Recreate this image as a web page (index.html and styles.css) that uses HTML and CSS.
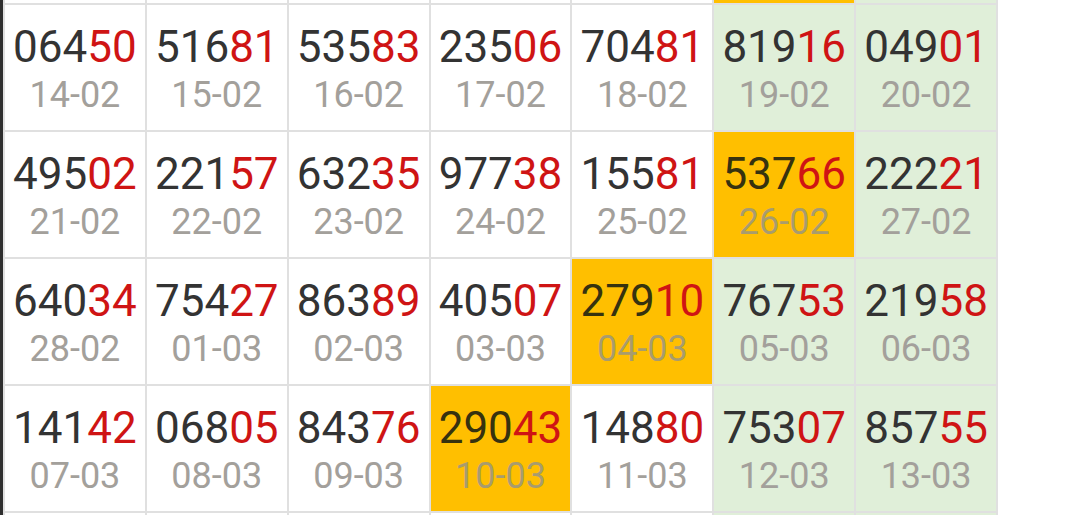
FILE: index.html
```html
<!DOCTYPE html>
<html>
<head>
<meta charset="utf-8">
<link rel="stylesheet" href="styles.css">
</head>
<body>
<div class="screen">
  <div class="edge"></div>
  <div class="viewport">
    <div class="table">
      <div class="cell"></div><div class="cell"></div><div class="cell"></div><div class="cell"></div><div class="cell"></div><div class="cell hit"></div><div class="cell wk"></div>

      <div class="cell"><div class="num">064<span class="r">50</span></div><div class="date">14-02</div></div>
      <div class="cell"><div class="num">516<span class="r">81</span></div><div class="date">15-02</div></div>
      <div class="cell"><div class="num">535<span class="r">83</span></div><div class="date">16-02</div></div>
      <div class="cell"><div class="num">235<span class="r">06</span></div><div class="date">17-02</div></div>
      <div class="cell"><div class="num">704<span class="r">81</span></div><div class="date">18-02</div></div>
      <div class="cell wk"><div class="num">819<span class="r">16</span></div><div class="date">19-02</div></div>
      <div class="cell wk"><div class="num">049<span class="r">01</span></div><div class="date">20-02</div></div>

      <div class="cell"><div class="num">495<span class="r">02</span></div><div class="date">21-02</div></div>
      <div class="cell"><div class="num">221<span class="r">57</span></div><div class="date">22-02</div></div>
      <div class="cell"><div class="num">632<span class="r">35</span></div><div class="date">23-02</div></div>
      <div class="cell"><div class="num">977<span class="r">38</span></div><div class="date">24-02</div></div>
      <div class="cell"><div class="num">155<span class="r">81</span></div><div class="date">25-02</div></div>
      <div class="cell hit"><div class="num">537<span class="r">66</span></div><div class="date">26-02</div></div>
      <div class="cell wk"><div class="num">222<span class="r">21</span></div><div class="date">27-02</div></div>

      <div class="cell"><div class="num">640<span class="r">34</span></div><div class="date">28-02</div></div>
      <div class="cell"><div class="num">754<span class="r">27</span></div><div class="date">01-03</div></div>
      <div class="cell"><div class="num">863<span class="r">89</span></div><div class="date">02-03</div></div>
      <div class="cell"><div class="num">405<span class="r">07</span></div><div class="date">03-03</div></div>
      <div class="cell hit"><div class="num">279<span class="r">10</span></div><div class="date">04-03</div></div>
      <div class="cell wk"><div class="num">767<span class="r">53</span></div><div class="date">05-03</div></div>
      <div class="cell wk"><div class="num">219<span class="r">58</span></div><div class="date">06-03</div></div>

      <div class="cell"><div class="num">141<span class="r">42</span></div><div class="date">07-03</div></div>
      <div class="cell"><div class="num">068<span class="r">05</span></div><div class="date">08-03</div></div>
      <div class="cell"><div class="num">843<span class="r">76</span></div><div class="date">09-03</div></div>
      <div class="cell hit"><div class="num">290<span class="r">43</span></div><div class="date">10-03</div></div>
      <div class="cell"><div class="num">148<span class="r">80</span></div><div class="date">11-03</div></div>
      <div class="cell wk"><div class="num">753<span class="r">07</span></div><div class="date">12-03</div></div>
      <div class="cell wk"><div class="num">857<span class="r">55</span></div><div class="date">13-03</div></div>

      <div class="cell"></div><div class="cell"></div><div class="cell"></div><div class="cell"></div><div class="cell"></div><div class="cell wk"></div><div class="cell wk"></div>
    </div>
  </div>
</div>
</body>
</html>
```

FILE: styles.css
```css
html, body {
  margin: 0;
  padding: 0;
  background: #ffffff;
}

body {
  font-family: Roboto, "Noto Sans", "Liberation Sans", sans-serif;
}

.screen {
  display: flex;
  width: 1080px;
  height: 515px;
  overflow: hidden;
}

.edge {
  width: 3px;
  flex: none;
  background: #2f2f2f;
}

.viewport {
  flex: none;
  width: 995px;
  height: 515px;
  overflow: hidden;
}

.table {
  display: grid;
  grid-template-columns: repeat(7, 1fr);
  grid-auto-rows: 125px;
  gap: 2px;
  padding: 0 2px;
  background: #e0e0e0;
  margin-top: -122px;
}

.cell {
  background: #ffffff;
  display: flex;
  flex-direction: column;
  align-items: center;
  justify-content: center;
  gap: 9px;
  padding-top: 2px;
}

.cell.wk {
  background: #e0efd9;
}

.cell.hit {
  background: #ffbf00;
}

.num {
  font-size: 44px;
  line-height: 44px;
  color: #333333;
  white-space: nowrap;
}

.num .r {
  color: #cf1414;
}

.date {
  font-size: 36px;
  line-height: 34px;
  color: #a3a09b;
  white-space: nowrap;
}

.cell.hit .num {
  color: #36320f;
}

.cell.hit .date {
  color: #a89c6e;
}
```
